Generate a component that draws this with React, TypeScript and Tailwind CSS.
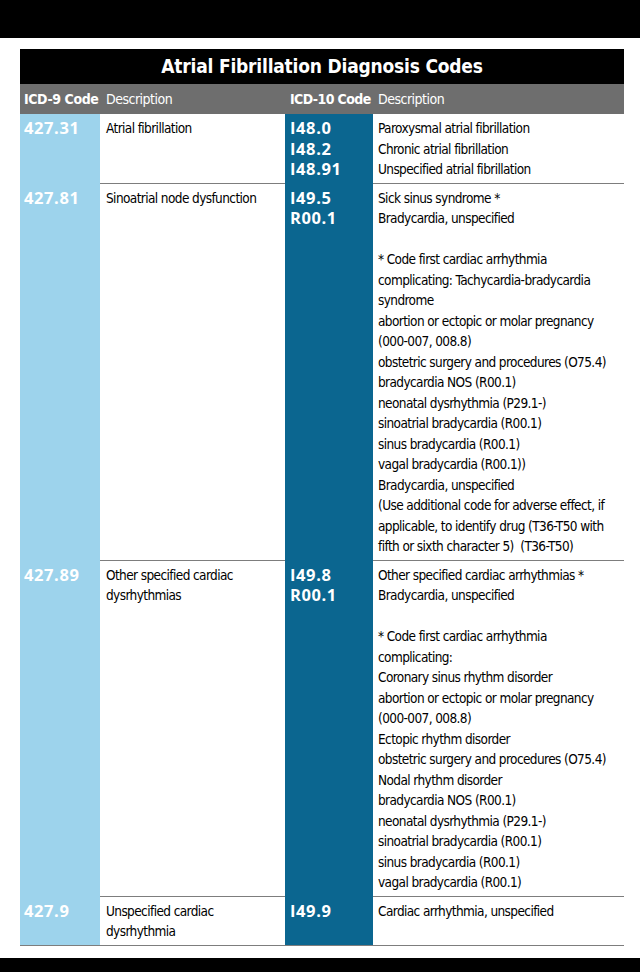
import React from 'react';

type Row = {
  icd9: string;
  desc9: string[];
  icd10: string[];
  desc10: string[];
};

const rows: Row[] = [
  {
    icd9: '427.31',
    desc9: ['Atrial fibrillation'],
    icd10: ['I48.0', 'I48.2', 'I48.91'],
    desc10: ['Paroxysmal atrial fibrillation', 'Chronic atrial fibrillation', 'Unspecified atrial fibrillation'],
  },
  {
    icd9: '427.81',
    desc9: ['Sinoatrial node dysfunction'],
    icd10: ['I49.5', 'R00.1'],
    desc10: [
      'Sick sinus syndrome *',
      'Bradycardia, unspecified',
      '',
      '* Code first cardiac arrhythmia',
      'complicating: Tachycardia-bradycardia',
      'syndrome',
      'abortion or ectopic or molar pregnancy',
      '(000-007, 008.8)',
      'obstetric surgery and procedures (O75.4)',
      'bradycardia NOS (R00.1)',
      'neonatal dysrhythmia (P29.1-)',
      'sinoatrial bradycardia (R00.1)',
      'sinus bradycardia (R00.1)',
      'vagal bradycardia (R00.1))',
      'Bradycardia, unspecified',
      '(Use additional code for adverse effect, if',
      'applicable, to identify drug (T36-T50 with',
      'fifth or sixth character 5)  (T36-T50)',
    ],
  },
  {
    icd9: '427.89',
    desc9: ['Other specified cardiac', 'dysrhythmias'],
    icd10: ['I49.8', 'R00.1'],
    desc10: [
      'Other specified cardiac arrhythmias *',
      'Bradycardia, unspecified',
      '',
      '* Code first cardiac arrhythmia',
      'complicating:',
      'Coronary sinus rhythm disorder',
      'abortion or ectopic or molar pregnancy',
      '(000-007, 008.8)',
      'Ectopic rhythm disorder',
      'obstetric surgery and procedures (O75.4)',
      'Nodal rhythm disorder',
      'bradycardia NOS (R00.1)',
      'neonatal dysrhythmia (P29.1-)',
      'sinoatrial bradycardia (R00.1)',
      'sinus bradycardia (R00.1)',
      'vagal bradycardia (R00.1)',
    ],
  },
  {
    icd9: '427.9',
    desc9: ['Unspecified cardiac', 'dysrhythmia'],
    icd10: ['I49.9'],
    desc10: ['Cardiac arrhythmia, unspecified'],
  },
];

// condensed face stands in for the narrow print font
const narrow = "font-['DejaVu_Sans_Condensed','DejaVu_Sans',sans-serif]";
const codeFont = "font-['Open_Sans',sans-serif]";

function Lines({ items }: { items: string[] }) {
  return (
    <>
      {items.map((t, i) => (
        <div key={i} className="h-[20.5px] leading-[20.5px] whitespace-pre">
          {t}
        </div>
      ))}
    </>
  );
}

export default function App() {
  return (
    <div className="w-[640px] h-[972px] bg-white flex flex-col overflow-hidden">
      <div className="h-[38px] bg-black shrink-0" />

      <div className="flex-1 px-[20px] pt-[11px]">
        <div className="w-[604px] border-b-[1.5px] border-[#7d7d7d]">
          {/* Title */}
          <div
            className={`h-[35px] bg-black flex items-center justify-center text-white font-bold text-[19px] tracking-[-0.2px] ${narrow}`}
          >
            Atrial Fibrillation Diagnosis Codes
          </div>

          {/* Header */}
          <div
            className={`h-[30px] bg-[#6e6e6e] grid grid-cols-[80px_185px_88px_251px] items-center text-white text-[14px] whitespace-nowrap ${narrow}`}
          >
            <div className="pl-[4px] font-bold tracking-[-0.4px]">ICD-9 Code</div>
            <div className="pl-[6px] tracking-[-0.5px]">Description</div>
            <div className="pl-[5px] font-bold tracking-[-0.6px]">ICD-10 Code</div>
            <div className="pl-[5px] tracking-[-0.5px]">Description</div>
          </div>

          {/* Rows */}
          {rows.map((r, idx) => {
            const last = idx === rows.length - 1;
            const line = last ? '' : 'border-b-[1.5px] border-[#7d7d7d]';
            return (
              <div key={r.icd9} className="grid grid-cols-[80px_185px_88px_251px]">
                <div
                  className={`bg-[#9dd3ec] pl-[4px] pt-[4px] pb-[3px] text-white font-bold text-[16.5px] tracking-[0.6px] leading-[20.5px] ${codeFont}`}
                >
                  {r.icd9}
                </div>
                <div
                  className={`pl-[6px] pt-[4px] pb-[3px] text-[13.5px] tracking-[-0.6px] text-black ${narrow} ${line}`}
                >
                  <Lines items={r.desc9} />
                </div>
                <div
                  className={`bg-[#0b6690] pl-[5px] pt-[4px] pb-[3px] text-white font-bold text-[16.5px] tracking-[0.6px] leading-[20.5px] ${codeFont}`}
                >
                  {r.icd10.map((c) => (
                    <div key={c} className="h-[20.5px]">
                      {c}
                    </div>
                  ))}
                </div>
                <div
                  className={`pl-[5px] pt-[4px] pb-[3px] text-[13.5px] tracking-[-0.6px] text-black ${narrow} ${line}`}
                >
                  <Lines items={r.desc10} />
                </div>
              </div>
            );
          })}
        </div>
      </div>

      <div className="h-[14px] bg-black shrink-0" />
    </div>
  );
}
